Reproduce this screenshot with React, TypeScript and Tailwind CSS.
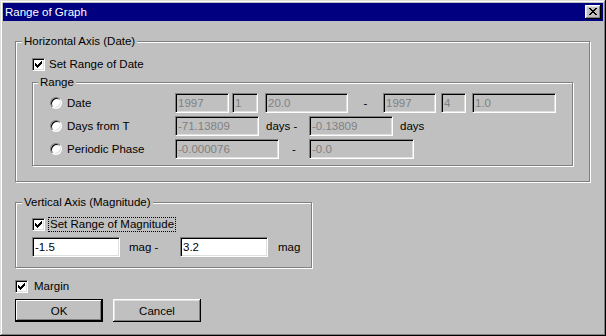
import React from 'react';

const sunken =
  'border border-t-[#808080] border-l-[#808080] border-b-white border-r-white shadow-[inset_1px_1px_0_#000,inset_-1px_-1px_0_#dfdfdf]';

const raised =
  'shadow-[inset_-1px_-1px_0_#000,inset_1px_1px_0_#fff,inset_-2px_-2px_0_#808080,inset_2px_2px_0_#dfdfdf]';

// etched group frame: grey line with a white line just inside/outside
const etched = 'border border-[#808080] shadow-[1px_1px_0_#fff,inset_1px_1px_0_#fff]';

function Check() {
  return (
    <div className={`relative w-[13px] h-[13px] shrink-0 bg-white ${sunken}`}>
      <svg width="7" height="7" viewBox="0 0 7 7" shapeRendering="crispEdges" className="absolute left-[2px] top-[2px]">
        <path
          d="M6 0h1v1h-1z M5 1h2v1h-2z M0 2h1v1h-1z M4 2h3v1h-3z M0 3h2v1h-2z M3 3h3v1h-3z M0 4h5v1h-5z M1 5h3v1h-3z M2 6h1v1h-1z"
          fill="#000"
        />
      </svg>
    </div>
  );
}

function Radio({ label }: { label: string }) {
  return (
    <div className="w-[125px] flex items-center shrink-0">
      <div className="w-[12px] h-[12px] rounded-full bg-white border border-t-[#808080] border-l-[#808080] border-b-white border-r-white shadow-[inset_1px_1px_0_#000,inset_-1px_-1px_0_#dfdfdf]" />
      <span className="ml-[5px]">{label}</span>
    </div>
  );
}

function Field({ value, w, on, className = '' }: { value: string; w: string; on?: boolean; className?: string }) {
  return (
    <div
      className={`${w} h-[20px] shrink-0 flex items-center pl-[2px] ${sunken} ${
        on ? 'bg-white text-black' : 'bg-[#c0c0c0] text-[#808080]'
      } ${className}`}
    >
      {value}
    </div>
  );
}

function GroupLabel({ text, left }: { text: string; left: string }) {
  return <span className={`absolute top-[-8px] ${left} px-[2px] bg-[#c0c0c0] leading-[14px]`}>{text}</span>;
}

export default function App() {
  return (
    <div className="w-[606px] h-[336px] bg-[#c0c0c0] p-[3px] shadow-[inset_-1px_-1px_0_#000,inset_1px_1px_0_#dfdfdf,inset_-2px_-2px_0_#808080,inset_2px_2px_0_#fff] font-['Liberation_Sans',Arial,sans-serif] text-[11.5px] leading-[14px] text-black">
      {/* title bar */}
      <div className="h-[18px] bg-[#000080] flex items-center pl-[2px] pr-[2px] text-white">
        <span>Range of Graph</span>
        <div className={`ml-auto w-[16px] h-[14px] bg-[#c0c0c0] relative ${raised}`}>
          <svg width="8" height="7" viewBox="0 0 8 7" shapeRendering="crispEdges" className="absolute left-[4px] top-[3px]">
            <path
              d="M0 0h2v1h-2z M6 0h2v1h-2z M1 1h2v1h-2z M5 1h2v1h-2z M2 2h4v1h-4z M3 3h2v1h-2z M2 4h4v1h-4z M1 5h2v1h-2z M5 5h2v1h-2z M0 6h2v1h-2z M6 6h2v1h-2z"
              fill="#000"
            />
          </svg>
        </div>
      </div>

      <div className="pl-[12px]">
        {/* Horizontal axis */}
        <div className={`relative mt-[20px] w-[575px] h-[141px] pl-[16px] pt-[14px] ${etched}`}>
          <GroupLabel text="Horizontal Axis (Date)" left="left-[6px]" />
          <div className="flex items-center h-[16px]">
            <Check />
            <span className="ml-[4px]">Set Range of Date</span>
          </div>

          <div className={`relative mt-[10px] w-[541px] h-[84px] pl-[17px] pt-[10px] ${etched}`}>
            <GroupLabel text="Range" left="left-[5px]" />
            <div className="flex flex-col gap-[3px]">
              <div className="flex items-center h-[20px]">
                <Radio label="Date" />
                <Field value="1997" w="w-[54px]" />
                <Field value="1" w="w-[26px]" className="ml-[3px]" />
                <Field value="20.0" w="w-[83px]" className="ml-[7px]" />
                <span className="w-[35px] text-center">-</span>
                <Field value="1997" w="w-[53px]" />
                <Field value="4" w="w-[25px]" className="ml-[5px]" />
                <Field value="1.0" w="w-[84px]" className="ml-[6px]" />
              </div>
              <div className="flex items-center h-[20px]">
                <Radio label="Days from T" />
                <Field value="-71.13809" w="w-[84px]" />
                <span className="w-[50px] pl-[7px]">days -</span>
                <Field value="-0.13809" w="w-[84px]" />
                <span className="ml-[7px]">days</span>
              </div>
              <div className="flex items-center h-[20px]">
                <Radio label="Periodic Phase" />
                <Field value="-0.000076" w="w-[104px]" />
                <span className="w-[30px] text-center">-</span>
                <Field value="-0.0" w="w-[105px]" />
              </div>
            </div>
          </div>
        </div>

        {/* Vertical axis */}
        <div className={`relative mt-[20px] w-[297px] h-[66px] pl-[16px] pt-[13px] ${etched}`}>
          <GroupLabel text="Vertical Axis (Magnitude)" left="left-[6px]" />
          <div className="flex items-center h-[16px]">
            <Check />
            <span className="ml-[3px] px-[1px] border border-dotted border-black leading-[13px]">Set Range of Magnitude</span>
          </div>
          <div className="flex items-center mt-[5px]">
            <Field value="-1.5" w="w-[88px]" on />
            <span className="w-[60px] pl-[9px]">mag -</span>
            <Field value="3.2" w="w-[88px]" on />
            <span className="ml-[10px]">mag</span>
          </div>
        </div>

        {/* margin */}
        <div className="flex items-center h-[16px] mt-[10px]">
          <Check />
          <span className="ml-[6px]">Margin</span>
        </div>

        <div className="flex gap-[10px] mt-[5px]">
          <button className="w-[88px] h-[23px] border border-black bg-[#c0c0c0] shadow-[inset_-1px_-1px_0_#000,inset_1px_1px_0_#fff,inset_-2px_-2px_0_#808080]">
            OK
          </button>
          <button className={`w-[88px] h-[23px] bg-[#c0c0c0] ${raised}`}>Cancel</button>
        </div>
      </div>
    </div>
  );
}
